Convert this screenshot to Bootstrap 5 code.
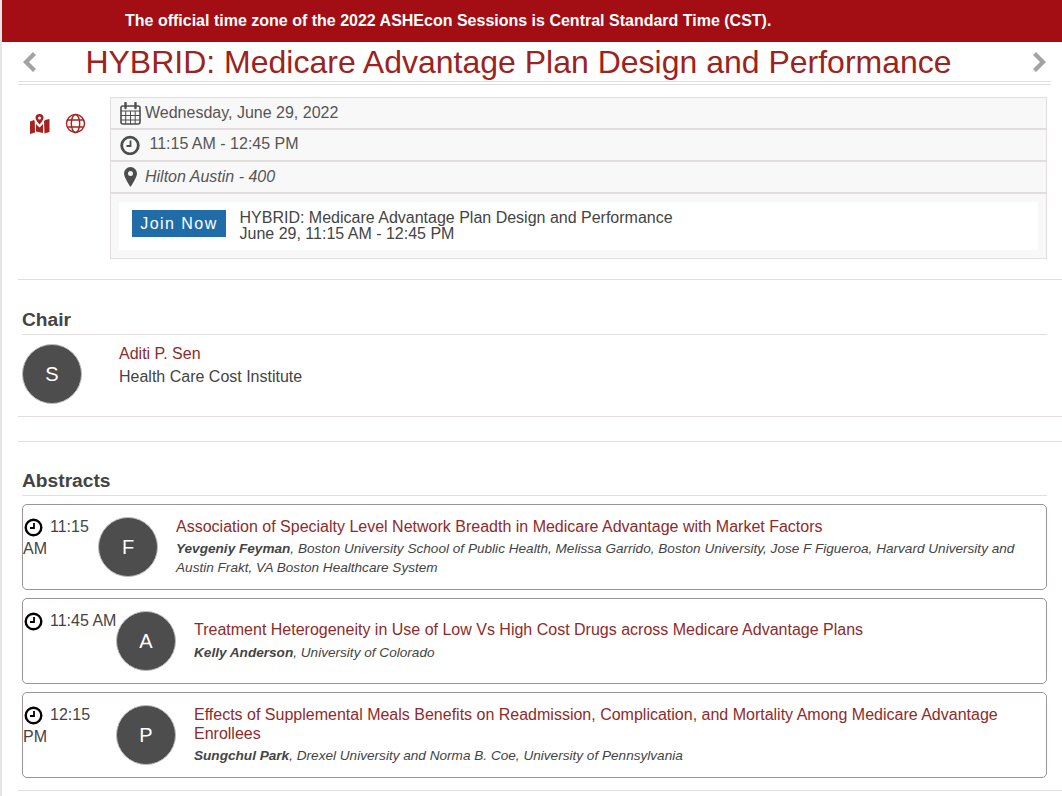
<!DOCTYPE html>
<html lang="en"><head><meta charset="utf-8"><title>Session</title>
<link rel="stylesheet" href="https://cdn.jsdelivr.net/npm/bootstrap@5.3.0/dist/css/bootstrap.min.css">
<style>
html,body{height:796px;overflow:hidden}
body{font-family:"Liberation Sans",Arial,sans-serif;color:#444;background:#fff;font-size:16px;line-height:20px;border-left:2px solid #e5e5e5}
a{text-decoration:none}
.tz-bar{background:#a30d14;color:#fff;font-weight:700;height:42px;margin-left:-2px;padding:11px 0 0 125px;line-height:19px}
.wrap{padding-left:16px}
.title-row{height:40px;margin-right:11px;border-bottom:1px solid #e2dede}
.title-row h1{font-size:32px;line-height:39px;color:#9b2320;margin:2px 0 0;font-weight:400;flex:1;text-align:center;padding-right:32px}
.nav-ic{display:block;width:14px;height:20px;fill:#a3a3a3}
.rule2{height:3px;margin-right:11px;border-bottom:1px solid #e2dede}
.info-zone{margin-top:12px;margin-right:15px}
.side-ics{width:92px;padding:16px 0 0 11px;gap:15px;flex:none}
.side-ics svg{width:21px;height:21px;color:#a8211f}
.info-box{border:1px solid #e2dede;border-bottom:0;background:#f8f8f8}
.info-line{height:32px;border-bottom:2px solid #e2dede;padding-left:9px;gap:4px;color:#555}
.info-line svg{flex:none;color:#4d4d4d}
.hour-txt{margin-top:-2px}
.join-zone{padding:8px;border-bottom:1px solid #e2dede;height:65px}
.join-inner{background:#fff;height:48px;padding:8px 13px;gap:13.500px}
.join-btn{background:#1f6ca8;color:#fff;letter-spacing:1.45px;width:94px;height:27px;line-height:28px;text-align:center;flex:none}
.join-txt{line-height:16px;color:#444}
.rule{border-top:1px solid #e2dede}
.rule-chair{margin-top:20px}
.sec-h{font-size:19.200px;font-weight:700;line-height:24px;color:#444;margin:0 15px 0 4px;padding-bottom:2px;border-bottom:1px solid #e2dede}
.chair-h{margin-top:28px}
.abs-h{margin-top:27px;margin-bottom:8px}
.face{width:60px;height:60px;border-radius:50%;background:#4d4d4d;color:#fff;font-size:20px;flex:none;border:1px solid #bbb}
.who{margin:9px 0 12px 4px;gap:37px}
.who a,.ab-title{color:#8e2b2b}
.who-lines{line-height:23px;margin-top:-2px}
.gap-rule{margin-top:24px}
.ab-card{border:1px solid #9b9494;border-radius:5px;margin:0 15px 8px 4px;height:86px}
.ab-time{flex:none;line-height:22px;padding-top:11px}
.ab-time svg{vertical-align:-5px;margin:0 7px 0 1px}
.t-a{width:75px}.t-b{width:93px}
.t-one{white-space:nowrap}
.ab-face{margin-top:12px}
.ab-body{padding:12px 20px 0 18px}
.ab-title{line-height:19px}
.ab-auth{font-size:13.6px;font-style:italic;line-height:19px;margin-top:3px}
.ab-mid{padding-top:21px}
.ab-mid .ab-auth{margin-top:4px}
.last-rule{margin-top:12px}
</style></head><body>
<div class="tz-bar">The official time zone of the 2022 ASHEcon Sessions is Central Standard Time (CST).</div>
<div class="wrap">
 <div class="title-row d-flex align-items-center">
  <svg class="nav-ic ms-1" viewBox="0 0 14 20"><path d="M11 0l3 3-7 7 7 7-3 3L1 10z"/></svg>
  <h1>HYBRID: Medicare Advantage Plan Design and Performance</h1>
  <svg class="nav-ic me-1" viewBox="0 0 14 20"><path d="M3 0L0 3l7 7-7 7 3 3 10-10z"/></svg>
 </div>
 <div class="rule2"></div>
 <div class="info-zone d-flex">
  <div class="side-ics d-flex align-items-start">
   <svg viewBox="0 0 21 21"><path fill="currentColor" d="M10.500 1a4 4 0 0 0-4 4c0 2 4 6.500 4 6.500s4-4.500 4-6.500a4 4 0 0 0-4-4zm0 2.500a1.500 1.500 0 1 1 0 3 1.500 1.500 0 0 1 0-3zM1 8.500l4-1.500.8 1.500L6 19.500l-5 1.500zM15 8.500l1-1.500 4.500-1v13l-5 1.500zM7 11l3.500 3.500L14 11v9l-7-1.500z"/></svg>
   <svg viewBox="0 0 21 21" fill="none" stroke="currentColor" stroke-width="1.400"><circle cx="10.500" cy="10.500" r="9"/><ellipse cx="10.500" cy="10.500" rx="4.200" ry="9"/><path d="M2.300 7h16.400M2.300 14h16.400"/></svg>
  </div>
  <div class="info-box flex-grow-1">
   <div class="info-line d-flex align-items-center"><svg width="21" height="23" viewBox="0 0 21 23" fill="none" stroke="currentColor"><rect x="1" y="4" width="19" height="18" rx="2" stroke-width="1.600"/><path d="M1 9h19M1 13.500h19M1 18h19M5.700 9v13M10.500 9v13M15.200 9v13" stroke-width="1"/><path d="M5.500 1v5M15.500 1v5" stroke-width="2.400" stroke-linecap="round"/></svg><span>Wednesday, June 29, 2022</span></div>
   <div class="info-line d-flex align-items-center"><svg width="21" height="20" viewBox="0 0 21 20" fill="none" stroke="currentColor"><circle cx="10" cy="10.500" r="8.300" stroke-width="2.800"/><path d="M10.500 5.500v5.500H6.500" stroke-width="1.800"/></svg><span class="hour-txt">&nbsp;11:15 AM - 12:45 PM</span></div>
   <div class="info-line d-flex align-items-center"><svg width="21" height="20" viewBox="0 0 21 20"><path fill="currentColor" fill-rule="evenodd" d="M10.500 0a6.500 6.500 0 0 0-6.500 6.500c0 4 6.500 13.500 6.500 13.500S17 10.500 17 6.500A6.500 6.500 0 0 0 10.500 0zm0 4a2.500 2.500 0 1 1 0 5 2.500 2.500 0 0 1 0-5z"/></svg><i>Hilton Austin - 400</i></div>
   <div class="join-zone">
    <div class="join-inner d-flex">
     <a class="join-btn" href="#">Join Now</a>
     <div class="join-txt">HYBRID: Medicare Advantage Plan Design and Performance<br>June 29, 11:15 AM - 12:45 PM</div>
    </div>
   </div>
  </div>
 </div>
 <div class="rule rule-chair"></div>
 <h2 class="sec-h chair-h">Chair</h2>
 <div class="who d-flex">
  <div class="face d-flex align-items-center justify-content-center">S</div>
  <div class="who-lines"><a href="#">Aditi P. Sen</a><br>Health Care Cost Institute</div>
 </div>
 <div class="rule"></div>
 <div class="rule gap-rule"></div>
 <h2 class="sec-h abs-h">Abstracts</h2>
 <div class="ab-card d-flex">
  <div class="ab-time t-a"><svg width="19" height="19" viewBox="0 0 19 19" fill="none" stroke="#000"><circle cx="9.500" cy="9.500" r="7.800" stroke-width="2.400"/><path d="M10 5v5H6" stroke-width="1.800"/></svg>11:15 AM</div>
  <div class="face ab-face d-flex align-items-center justify-content-center">F</div>
  <div class="ab-body"><div class="ab-title">Association of Specialty Level Network Breadth in Medicare Advantage with Market Factors</div><div class="ab-auth"><b>Yevgeniy Feyman</b>, Boston University School of Public Health, Melissa Garrido, Boston University, Jose F Figueroa, Harvard University and Austin Frakt, VA Boston Healthcare System</div></div>
 </div>
 <div class="ab-card d-flex">
  <div class="ab-time t-b t-one"><svg width="19" height="19" viewBox="0 0 19 19" fill="none" stroke="#000"><circle cx="9.500" cy="9.500" r="7.800" stroke-width="2.400"/><path d="M10 5v5H6" stroke-width="1.800"/></svg>11:45 AM</div>
  <div class="face ab-face d-flex align-items-center justify-content-center">A</div>
  <div class="ab-body ab-mid"><div class="ab-title">Treatment Heterogeneity in Use of Low Vs High Cost Drugs across Medicare Advantage Plans</div><div class="ab-auth"><b>Kelly Anderson</b>, University of Colorado</div></div>
 </div>
 <div class="ab-card d-flex">
  <div class="ab-time t-b"><svg width="19" height="19" viewBox="0 0 19 19" fill="none" stroke="#000"><circle cx="9.500" cy="9.500" r="7.800" stroke-width="2.400"/><path d="M10 5v5H6" stroke-width="1.800"/></svg>12:15 PM</div>
  <div class="face ab-face d-flex align-items-center justify-content-center">P</div>
  <div class="ab-body"><div class="ab-title">Effects of Supplemental Meals Benefits on Readmission, Complication, and Mortality Among Medicare Advantage Enrollees</div><div class="ab-auth"><b>Sungchul Park</b>, Drexel University and Norma B. Coe, University of Pennsylvania</div></div>
 </div>
 <div class="rule last-rule"></div>
</div>
</body></html>
